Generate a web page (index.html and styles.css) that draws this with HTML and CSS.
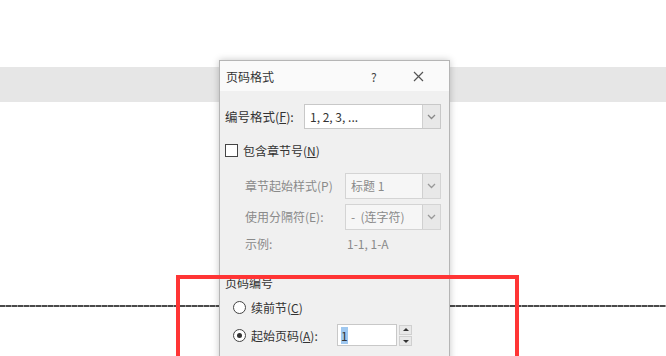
FILE: index.html
```html
<!DOCTYPE html>
<html lang="zh-CN">
<head>
    <meta charset="UTF-8" />
    <meta name="viewport" content="width=device-width, initial-scale=1.0" />
    <title>页码格式</title>
    <link rel="stylesheet" href="styles.css">
</head>
<body>
    <div class="page">
        <div class="band"></div>
        <div class="rule"></div>

        <div class="dialog">
            <div class="titlebar">
                <span class="title">页码格式</span>
                <span class="help">?</span>
                <span class="close"><svg width="11" height="11" viewBox="0 0 11 11"><path d="M1 1l9 9M10 1l-9 9" stroke="#555" stroke-width="1.2"/></svg></span>
            </div>

            <div class="body">
                <div class="row row-format">
                    <span class="label">编号格式(<u>F</u>):</span>
                    <div class="select wide">
                        <span class="value">1, 2, 3, ...</span>
                        <span class="arrow"><svg width="9" height="6" viewBox="0 0 9 6"><path d="M1 1l3.5 3.5L8 1" fill="none" stroke="#888" stroke-width="1.3"/></svg></span>
                    </div>
                </div>

                <div class="row row-check">
                    <span class="checkbox"></span>
                    <span class="label">包含章节号(<u>N</u>)</span>
                </div>

                <div class="row row-sub">
                    <span class="label muted">章节起始样式(P)</span>
                    <div class="select narrow">
                        <span class="value muted">标题 1</span>
                        <span class="arrow"><svg width="9" height="6" viewBox="0 0 9 6"><path d="M1 1l3.5 3.5L8 1" fill="none" stroke="#999" stroke-width="1.3"/></svg></span>
                    </div>
                </div>

                <div class="row row-sub">
                    <span class="label muted">使用分隔符(E):</span>
                    <div class="select narrow">
                        <span class="value muted">-&nbsp;&nbsp;(连字符)</span>
                        <span class="arrow"><svg width="9" height="6" viewBox="0 0 9 6"><path d="M1 1l3.5 3.5L8 1" fill="none" stroke="#999" stroke-width="1.3"/></svg></span>
                    </div>
                </div>

                <div class="row row-sample">
                    <span class="label muted">示例:</span>
                    <span class="sample muted">1-1, 1-A</span>
                </div>

                <div class="group-title">页码编号</div>

                <div class="row row-radio">
                    <span class="radio"></span>
                    <span class="label">续前节(<u>C</u>)</span>
                </div>

                <div class="row row-radio">
                    <span class="radio checked"></span>
                    <span class="label">起始页码(<u>A</u>):</span>
                    <div class="spin">
                        <span class="spin-value">1</span>
                        <span class="spin-btns">
                            <span class="up"></span>
                            <span class="down"></span>
                        </span>
                    </div>
                </div>
            </div>
        </div>

        <div class="mark"></div>
    </div>
</body>
</html>
```

FILE: styles.css
```css
body { margin: 0; background: #fff; font-family: "Noto Sans CJK SC", "Noto Sans", sans-serif; font-size: 12px; color: #333; }
.page { position: relative; width: 666px; height: 356px; overflow: hidden; background: #fff; }
.band { margin-top: 67px; height: 35px; background: #e6e6e6; }
.rule { position: absolute; left: 0; right: 0; top: 305px; height: 2px; background: repeating-linear-gradient(90deg, #4a4a4a 0 5px, #999 5px 6px); }

.dialog { position: absolute; left: 219px; top: 60px; width: 229px; height: 320px; background: #f0f0f0; border: 1px solid #b5b5b5; box-shadow: 0 0 7px rgba(0, 0, 0, 0.22); }
.titlebar { display: flex; align-items: center; height: 30px; padding-left: 6px; background: #fafafa; }
.title { flex: 1; }
.help { width: 42px; font-size: 12px; color: #444; }
.close { display: flex; width: 20px; margin-right: 16px; }

.body { padding: 12px 0 0 5px; }
.row { display: flex; align-items: center; }
.label u { text-decoration: underline; }
.muted { color: #8a8a8a; }

.row-format { height: 27px; }
.row-format .label { width: 79px; font-size: 12.5px; }
.select { display: flex; align-items: center; height: 25px; background: #fff; border: 1px solid #c8c8c8; box-sizing: border-box; }
.select .value { flex: 1; padding-left: 5px; }
.select .arrow { display: flex; align-items: center; justify-content: center; width: 17px; height: 100%; background: #e8e8e8; border-left: 1px solid #d0d0d0; }
.select.wide { width: 137px; }
.select.narrow { width: 96px; height: 26px; background: #f6f6f6; border-color: #d4d4d4; }

.row-check { height: 22px; margin-top: 9px; }
.checkbox { width: 11px; height: 11px; border: 1px solid #444; background: #fff; margin-right: 5px; }

.row-sub { height: 27px; padding-left: 20px; margin-top: 4px; }
.row-sub:nth-child(3) { margin-top: 11px; }
.row-sub .label { width: 100px; }

.row-sample { height: 20px; padding-left: 20px; margin-top: 3px; }
.row-sample .label { width: 102px; }

.group-title { margin-top: 21px; height: 18px; line-height: 18px; }

.row-radio { height: 26px; padding-left: 8px; margin-top: 2px; }
.radio { width: 11px; height: 11px; border: 1px solid #444; border-radius: 50%; background: #fff; margin-right: 5px; position: relative; }
.radio.checked::after { content: ""; position: absolute; left: 3px; top: 3px; width: 5px; height: 5px; border-radius: 50%; background: #333; }
.row-radio .label { width: 86px; }
.spin { display: flex; align-items: center; gap: 2px; }
.spin-value { width: 60px; height: 22px; line-height: 22px; background: #fff; border: 1px solid #c8c8c8; box-sizing: border-box; padding-left: 3px; }
.spin-value::first-letter { background: #9fc8f0; }
.spin-btns { display: flex; flex-direction: column; gap: 1px; }
.spin-btns span { width: 13px; height: 10px; background: #e8e8e8; border: 1px solid #d0d0d0; box-sizing: border-box; position: relative; }
.spin-btns .up::after { content: ""; position: absolute; left: 3px; top: 2px; border: 3px solid transparent; border-bottom-color: #333; border-top: 0; }
.spin-btns .down::after { content: ""; position: absolute; left: 3px; top: 3px; border: 3px solid transparent; border-top-color: #333; border-bottom: 0; }

.mark { position: absolute; left: 176px; top: 275px; width: 335px; height: 120px; border: 4px solid #ff3535; }
```
